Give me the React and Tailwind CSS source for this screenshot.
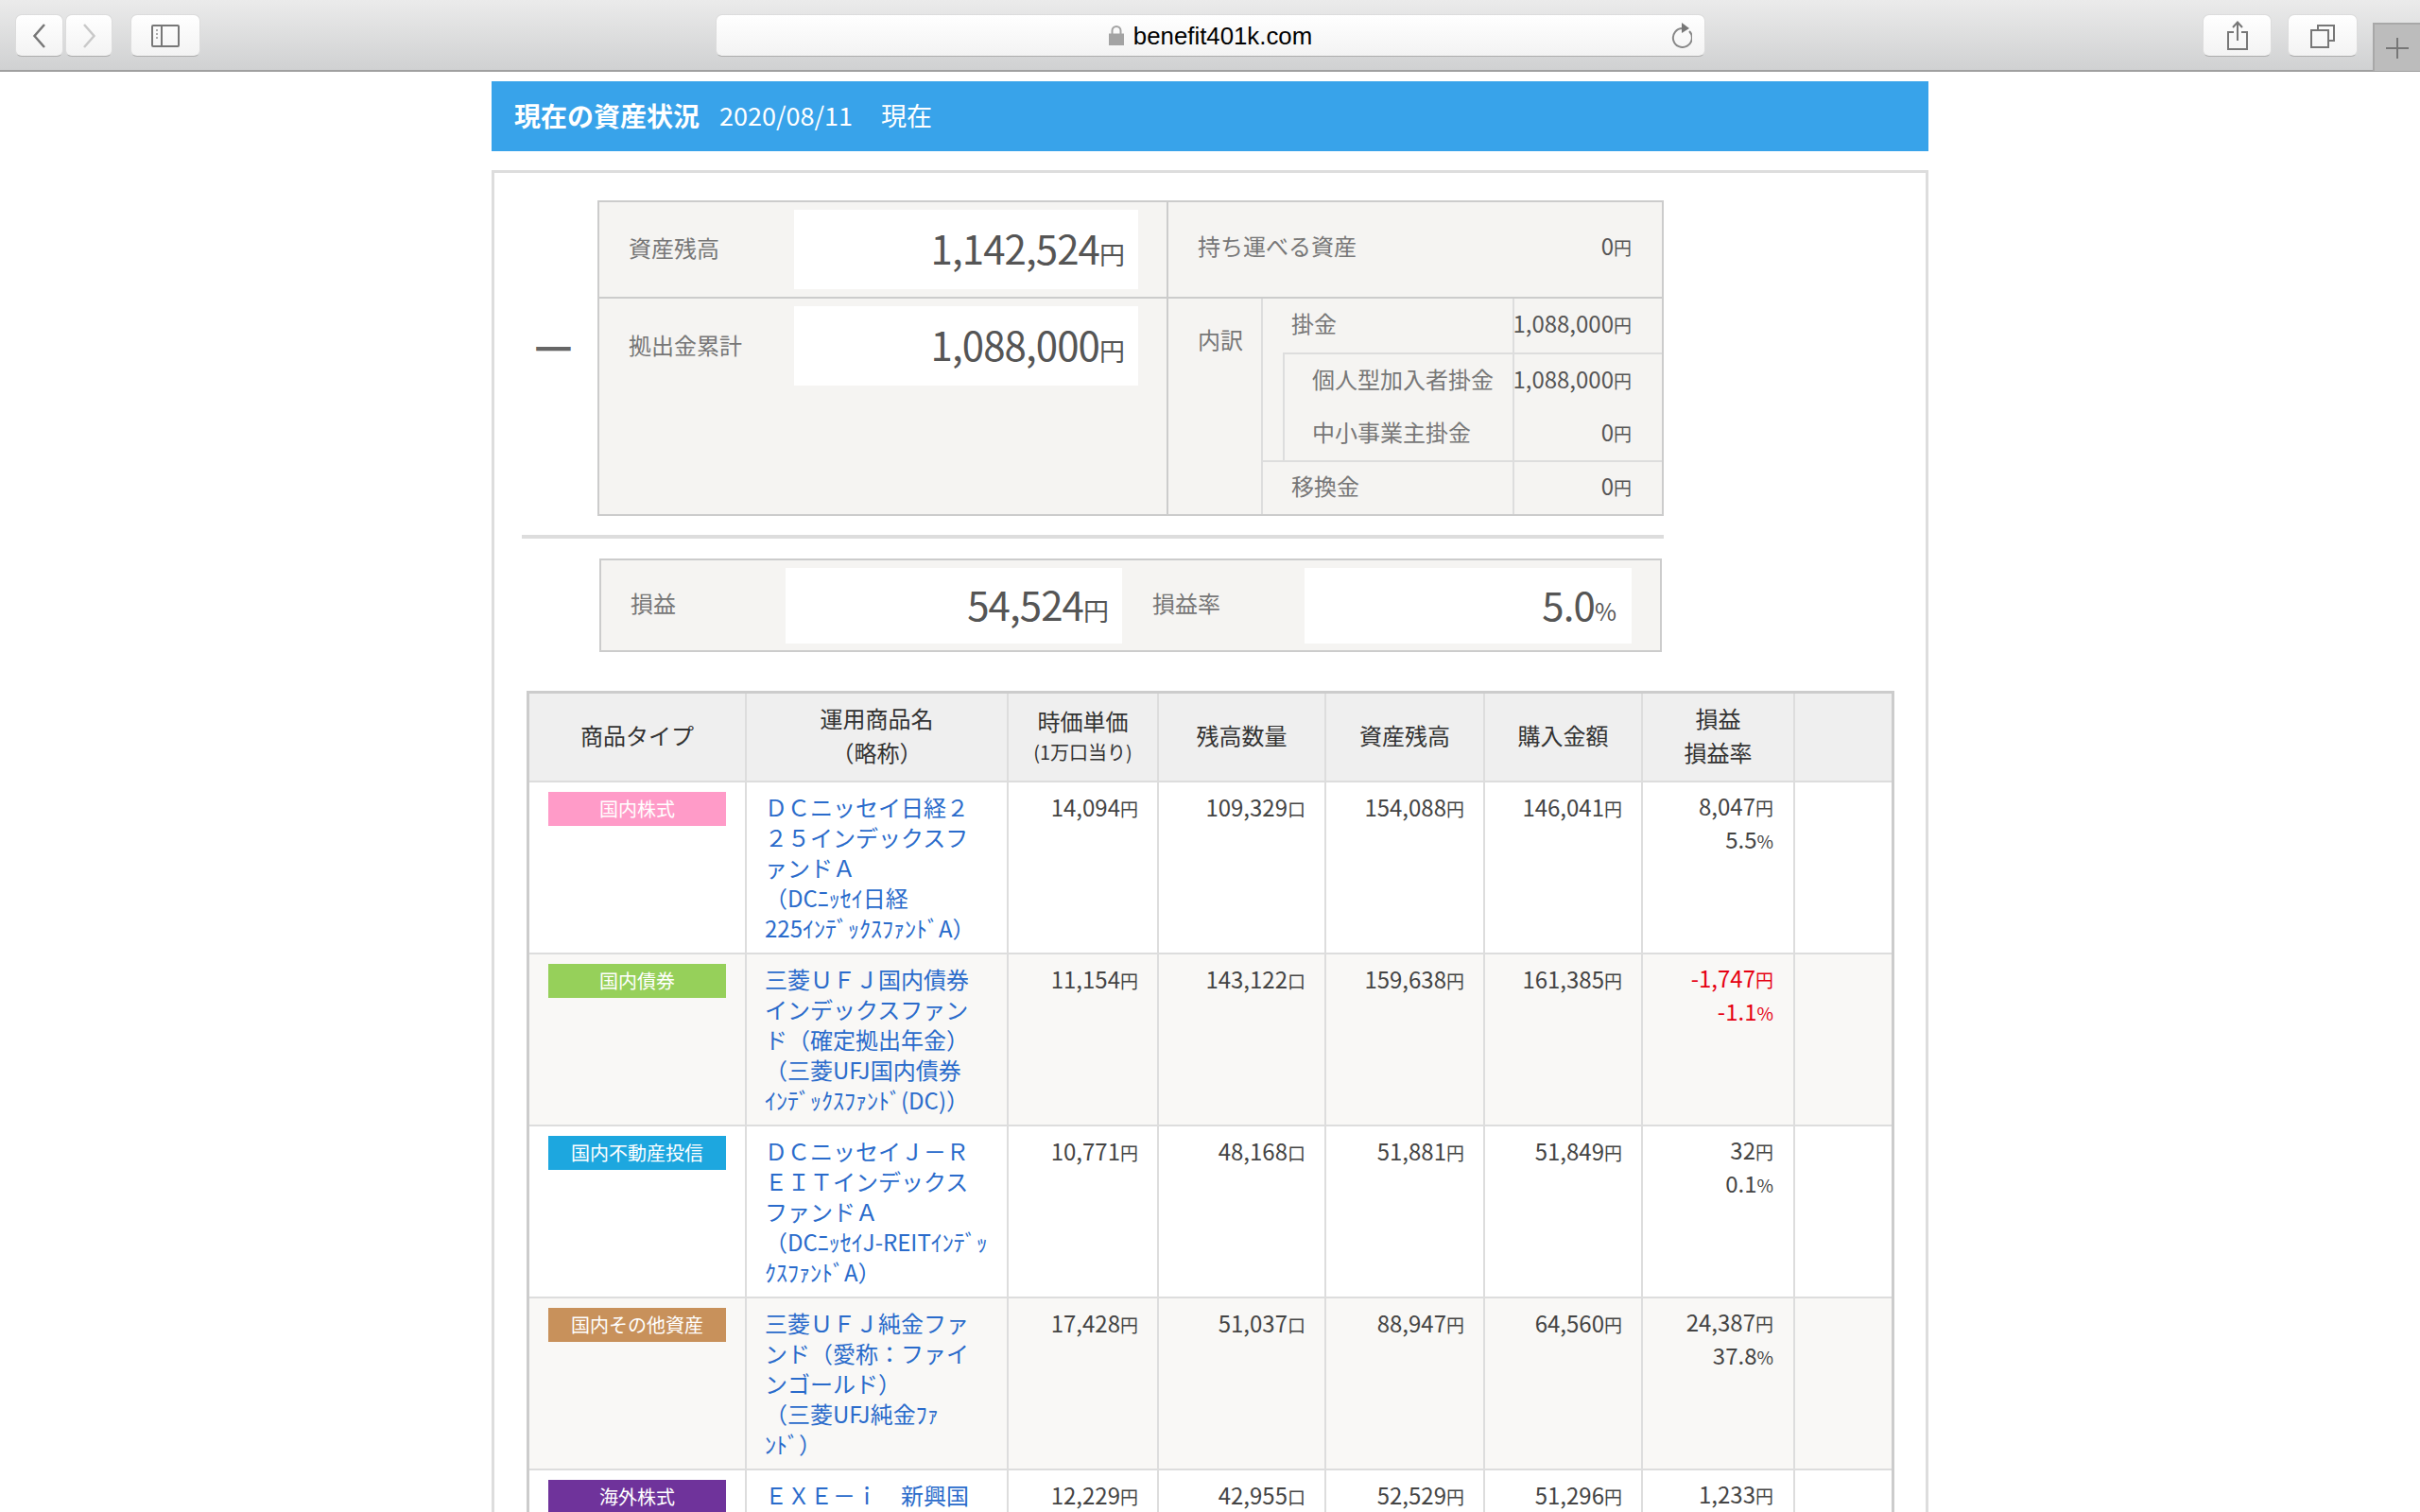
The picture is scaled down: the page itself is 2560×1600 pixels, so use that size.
import React from 'react'

const rows = [
    {
        badge: '国内株式', badgeClass: 'bg-[#ff9bc8]',
        name: ['ＤＣニッセイ日経２', '２５インデックスフ', 'ァンドＡ', '（DCﾆｯｾｲ日経', '225ｲﾝﾃﾞｯｸｽﾌｧﾝﾄﾞA）'],
        price: '14,094', qty: '109,329', balance: '154,088', cost: '146,041', gain: '8,047', rate: '5.5',
    },
    {
        badge: '国内債券', badgeClass: 'bg-[#96d05a]',
        name: ['三菱ＵＦＪ国内債券', 'インデックスファン', 'ド（確定拠出年金）', '（三菱UFJ国内債券', 'ｲﾝﾃﾞｯｸｽﾌｧﾝﾄﾞ(DC)）'],
        price: '11,154', qty: '143,122', balance: '159,638', cost: '161,385', gain: '-1,747', rate: '-1.1', loss: true,
    },
    {
        badge: '国内不動産投信', badgeClass: 'bg-[#1da7df]',
        name: ['ＤＣニッセイＪ－Ｒ', 'ＥＩＴインデックス', 'ファンドＡ', '（DCﾆｯｾｲJ-REITｲﾝﾃﾞｯ', 'ｸｽﾌｧﾝﾄﾞA）'],
        price: '10,771', qty: '48,168', balance: '51,881', cost: '51,849', gain: '32', rate: '0.1',
    },
    {
        badge: '国内その他資産', badgeClass: 'bg-[#c8915b]',
        name: ['三菱ＵＦＪ純金ファ', 'ンド（愛称：ファイ', 'ンゴールド）', '（三菱UFJ純金ﾌｧ', 'ﾝﾄﾞ）'],
        price: '17,428', qty: '51,037', balance: '88,947', cost: '64,560', gain: '24,387', rate: '37.8',
    },
    {
        badge: '海外株式', badgeClass: 'bg-[#6f339b]',
        name: ['ＥＸＥ－ｉ　新興国'],
        price: '12,229', qty: '42,955', balance: '52,529', cost: '51,296', gain: '1,233',
    },
]

const gridCols = 'grid grid-cols-[230px_277px_159px_177px_168px_167px_161px_102px]'
const btn = 'h-[45px] flex items-center justify-center rounded-[7px] border border-[#dcdcdc] border-b-[#adadad] bg-gradient-to-b from-white to-[#f3f3f3]'

function Num({ value, unit = '円', className = '' }) {
    return (
        <span className={`whitespace-nowrap ${className}`}>
            {value}<span className="text-[19px] leading-none">{unit}</span>
        </span>
    )
}

function Big({ value, unit = '円' }) {
    return (
        <span className="whitespace-nowrap text-[42px] leading-[48px] tracking-[-0.9px] text-[#555]">
            {value}<span className={`${unit === '%' ? 'text-[25px]' : 'text-[27px]'} leading-none tracking-normal`}>{unit}</span>
        </span>
    )
}

function Toolbar() {
    return (
        <div className="h-[76px] flex items-start pt-[15px] pl-4 border-b-2 border-[#a0a0a0] bg-gradient-to-b from-[#ebebeb] to-[#d0d1d2]">
            <div className={`${btn} w-[51px]`}>
                <svg width="15" height="26" viewBox="0 0 15 26" fill="none" stroke="#777" strokeWidth="2.5"><path d="M13 1 L2.5 13 L13 25" /></svg>
            </div>
            <div className={`${btn} w-[50px] ml-[2px]`}>
                <svg width="15" height="26" viewBox="0 0 15 26" fill="none" stroke="#c9c9c9" strokeWidth="2.5"><path d="M2 1 L12.5 13 L2 25" /></svg>
            </div>
            <div className={`${btn} w-[74px] ml-[19px]`}>
                <svg width="30" height="24" viewBox="0 0 30 24" fill="none" stroke="#777">
                    <rect x="1" y="1" width="28" height="22" strokeWidth="2" rx="1" />
                    <path d="M11 1 V23" strokeWidth="2" />
                    <path d="M5 6 H7 M5 10 H7 M5 14 H7" strokeWidth="2" stroke="#aaa" />
                </svg>
            </div>
            <div className={`${btn} w-[1047px] ml-[545px] relative`}>
                <div className="flex items-center gap-[9px] mr-[1px]">
                    <svg width="18" height="21" viewBox="0 0 18 21" fill="none">
                        <path d="M4.5 9 V5.5 a4.5 4.5 0 0 1 9 0 V9" stroke="#a3a3a3" strokeWidth="2" />
                        <rect x="1" y="8.5" width="16" height="12.5" fill="#a3a3a3" />
                    </svg>
                    <span className="pt-[2px] font-['Liberation_Sans',sans-serif] text-[25.8px] leading-none text-black">benefit401k.com</span>
                </div>
                <svg className="absolute right-[13px] top-[8px]" width="24" height="28" viewBox="0 0 24 28" fill="none">
                    <path d="M14 6 a10 10 0 1 0 7 3" stroke="#888" strokeWidth="2" />
                    <path d="M13 0 L21 6 L13 11 Z" fill="#777" />
                </svg>
            </div>
            <div className={`${btn} w-[73px] ml-[526px]`}>
                <svg width="24" height="32" viewBox="0 0 24 32" fill="none" stroke="#777" strokeWidth="2">
                    <path d="M8 12 H2 V30 H22 V12 H16" />
                    <path d="M12 21 V2 M7 7 L12 1.5 L17 7" />
                </svg>
            </div>
            <div className={`${btn} w-[74px] ml-[17px]`}>
                <svg width="28" height="26" viewBox="0 0 28 26" fill="none" stroke="#777" strokeWidth="2">
                    <rect x="2" y="7" width="18" height="18" />
                    <path d="M9 7 V2 H26 V18 H20" />
                </svg>
            </div>
            <div className="w-[50px] h-[51px] mt-[9px] ml-[16px] bg-[#bcbcbc] border-t-2 border-l-2 border-[#a8a8a8] flex items-center justify-center">
                <svg width="24" height="24" viewBox="0 0 24 24" fill="none" stroke="#777" strokeWidth="2"><path d="M12 1 V23 M0 12 H24" /></svg>
            </div>
        </div>
    )
}

function SummaryPanel() {
    return (
        <div className="flex">
            <div className="w-[109px] pl-[42px] pt-[122px]">
                <div className="text-[45px] leading-[58px] font-bold text-[#666]">—</div>
            </div>
            <div className="w-[1128px] h-[334px] border-2 border-[#ccc] bg-[#f5f4f2] text-[24px] text-[#777]">
                <div className="flex h-[102px] border-b-2 border-[#ccc]">
                    <div className="w-[602px] shrink-0 border-r-2 border-[#ccc] flex justify-between pt-[8px] pl-[31px] pr-[30px]">
                        <div className="h-[84px] pb-[5px] flex items-center">資産残高</div>
                        <div className="w-[364px] h-[84px] pb-[4px] bg-white flex items-center justify-end pr-[14px]"><Big value="1,142,524" /></div>
                    </div>
                    <div className="flex-1 min-w-0 flex items-center justify-between pl-[31px] pr-[32px] pb-[8px]">
                        <span>持ち運べる資産</span>
                        <Num value="0" className="text-[#555]" />
                    </div>
                </div>
                <div className="flex h-[228px]">
                    <div className="w-[602px] shrink-0 border-r-2 border-[#ccc] flex justify-between items-start pt-[8px] pl-[31px] pr-[30px]">
                        <div className="h-[84px] pb-[3px] flex items-center">拠出金累計</div>
                        <div className="w-[364px] h-[84px] pb-[4px] bg-white flex items-center justify-end pr-[14px]"><Big value="1,088,000" /></div>
                    </div>
                    <div className="w-[100px] shrink-0 border-r-2 border-[#ddd] pl-[31px] pt-[25px]">内訳</div>
                    <div className="flex-1 min-w-0 flex flex-col">
                        <div className="h-[57px] grid grid-cols-[266px_minmax(0,1fr)] items-stretch">
                            <div className="pl-[30px] pb-[5px] flex items-center border-r-2 border-[#ddd]">掛金</div>
                            <div className="flex items-center justify-end pb-[5px] pr-[32px]"><Num value="1,088,000" className="text-[#555]" /></div>
                        </div>
                        <div className="ml-[21px] border-l-2 border-t-2 border-[#ddd]">
                            <div className="h-[56px] grid grid-cols-[243px_minmax(0,1fr)]">
                                <div className="pl-[29px] pb-[5px] flex items-center border-r-2 border-[#ddd] whitespace-nowrap">個人型加入者掛金</div>
                                <div className="flex items-center justify-end pb-[5px] pr-[32px]"><Num value="1,088,000" className="text-[#555]" /></div>
                            </div>
                            <div className="h-[56px] grid grid-cols-[243px_minmax(0,1fr)]">
                                <div className="pl-[29px] pb-[5px] flex items-center border-r-2 border-[#ddd]">中小事業主掛金</div>
                                <div className="flex items-center justify-end pb-[5px] pr-[32px]"><Num value="0" className="text-[#555]" /></div>
                            </div>
                        </div>
                        <div className="flex-1 grid grid-cols-[266px_minmax(0,1fr)] border-t-2 border-[#ddd]">
                            <div className="pl-[30px] pb-[5px] flex items-center border-r-2 border-[#ddd]">移換金</div>
                            <div className="flex items-center justify-end pb-[5px] pr-[32px]"><Num value="0" className="text-[#555]" /></div>
                        </div>
                    </div>
                </div>
            </div>
        </div>
    )
}

function ProfitPanel() {
    return (
        <div className="ml-[111px] mt-[21px] w-[1124px] h-[99px] border-2 border-[#ccc] bg-[#f5f4f2] flex items-center pl-[31px] text-[24px] text-[#777]">
            <div className="w-[164px] pb-[5px]">損益</div>
            <div className="w-[356px] h-[80px] pb-[4px] bg-white flex items-center justify-end pr-[14px]"><Big value="54,524" /></div>
            <div className="ml-[32px] w-[161px] pb-[5px]">損益率</div>
            <div className="w-[346px] h-[80px] pb-[4px] bg-white flex items-center justify-end pr-4"><Big value="5.0" unit="%" /></div>
        </div>
    )
}

function HoldingsTable() {
    const head = 'border-r-2 border-[#ddd] pb-[5px] flex flex-col items-center justify-center text-center leading-[36px]'
    const cell = 'border-r-2 border-[#ddd] pt-[10px] pr-5 text-right leading-[32px]'
    return (
        <div className="ml-[34px] mt-[41px] w-[1447px] border-[3px] border-[#ccc] text-[24px] text-[#444]">
            <div className={`${gridCols} h-[94px] bg-[#efefef] border-b-2 border-[#ddd] text-[#333]`}>
                <div className={head}>商品タイプ</div>
                <div className={head}><span>運用商品名</span><span>（略称）</span></div>
                <div className={head}><span>時価単価</span><span className="text-[20px] leading-[30px]">(1万口当り)</span></div>
                <div className={head}>残高数量</div>
                <div className={head}>資産残高</div>
                <div className={head}>購入金額</div>
                <div className={head}><span>損益</span><span>損益率</span></div>
                <div />
            </div>
            {rows.map((row, i) => (
                <div key={row.badge} className={`${gridCols} h-[182px] border-b-2 border-[#ddd] ${i % 2 === 1 ? 'bg-[#f9f8f6]' : 'bg-white'}`}>
                    <div className="border-r-2 border-[#ddd] pt-[10px] pl-[20px]">
                        <div className={`w-[188px] h-[36px] flex items-center justify-center text-[20px] text-white ${row.badgeClass}`}>{row.badge}</div>
                    </div>
                    <div className="border-r-2 border-[#ddd] pt-[10px] pl-[19px] leading-[32px] text-[#2a6bcb]">
                        {row.name.map((line) => (
                            <div key={line} className="whitespace-nowrap">{line}</div>
                        ))}
                    </div>
                    <div className={cell}><Num value={row.price} /></div>
                    <div className={cell}><Num value={row.qty} unit="口" /></div>
                    <div className={cell}><Num value={row.balance} /></div>
                    <div className={cell}><Num value={row.cost} /></div>
                    <div className={`border-r-2 border-[#ddd] pt-[7px] pr-[21px] text-right leading-[35px] ${row.loss ? 'text-[#e60012]' : ''}`}>
                        <div><Num value={row.gain} /></div>
                        {row.rate && <div><Num value={row.rate} unit="%" /></div>}
                    </div>
                    <div />
                </div>
            ))}
        </div>
    )
}

export default function App() {
    return (
        <div className="h-screen overflow-hidden bg-white font-['Noto_Sans_CJK_JP','Noto_Sans',sans-serif]">
            <Toolbar />
            <div className="w-[1520px] mx-auto mt-[10px]">
                <div className="h-[74px] pb-[2px] bg-[#38a3ea] flex items-center pl-[24px] text-[27px] text-white">
                    <span className="text-[28px] font-bold">現在の資産状況</span>
                    <span className="ml-[21px]">2020/08/11</span>
                    <span className="ml-[30px]">現在</span>
                </div>
                <div className="mt-[20px] border-[3px] border-[#ddd] pt-[29px] pb-10">
                    <SummaryPanel />
                    <div className="ml-[29px] mt-[20px] w-[1208px] h-[4px] bg-[#ddd]" />
                    <ProfitPanel />
                    <HoldingsTable />
                </div>
            </div>
        </div>
    )
}
